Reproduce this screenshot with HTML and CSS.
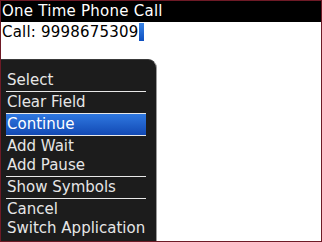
FILE: index.html
```html
<!DOCTYPE html>
<html>
<head>
<meta charset="utf-8">
<link rel="stylesheet" href="styles.css">
</head>
<body>
<div class="screen">
  <div class="titlebar">One Time Phone Call</div>
  <div class="field">Call: 9998675309<span class="cursor"></span></div>
  <div class="menu">
    <div class="item">Select</div>
    <div class="sep"></div>
    <div class="item">Clear Field</div>
    <div class="sep"></div>
    <div class="item selected">Continue</div>
    <div class="sep"></div>
    <div class="item">Add Wait</div>
    <div class="item">Add Pause</div>
    <div class="sep"></div>
    <div class="item">Show Symbols</div>
    <div class="sep"></div>
    <div class="item">Cancel</div>
    <div class="item">Switch Application</div>
  </div>
</div>
</body>
</html>
```
FILE: styles.css
```css
html, body {
  margin: 0;
  padding: 0;
  background: #fff;
}
.screen {
  position: relative;
  box-sizing: border-box;
  width: 322px;
  height: 242px;
  border: 1px solid #6e1a26;
  background: #fff;
  overflow: hidden;
  font-family: "DejaVu Sans", sans-serif;
  font-size: 15px;
}
.titlebar {
  background: #000;
  color: #fff;
  height: 21px;
  line-height: 20px;
  padding-left: 1px;
  letter-spacing: 0.25px;
}
.field {
  color: #000;
  height: 20px;
  line-height: 20px;
  padding-left: 1px;
  display: flex;
  align-items: center;
  letter-spacing: 0.2px;
}
.cursor {
  display: inline-block;
  width: 5px;
  height: 18px;
  margin-left: 1px;
  background: linear-gradient(#3a86e8, #0d4fc0);
}
.menu {
  position: absolute;
  left: 0;
  top: 58px;
  width: 156px;
  bottom: 0;
  box-sizing: border-box;
  background: #1c1c1c;
  border-top-right-radius: 9px;
  border-right: 1px solid #9a9a9a;
  border-top: 1px solid #3a3a3a;
  padding-top: 11px;
  color: #e6e6e6;
}
.item {
  height: 19px;
  line-height: 19px;
  margin: 0 10px 0 5px;
  padding-left: 1px;
  white-space: nowrap;
}
.item.selected {
  height: 21px;
  line-height: 21px;
  margin-top: -1px;
  margin-bottom: -1px;
  background: linear-gradient(#2f78e0, #1249b4);
  color: #fff;
}
.sep {
  height: 1px;
  margin: 1px 10px 1px 5px;
  background: #e8e8e8;
}
```
